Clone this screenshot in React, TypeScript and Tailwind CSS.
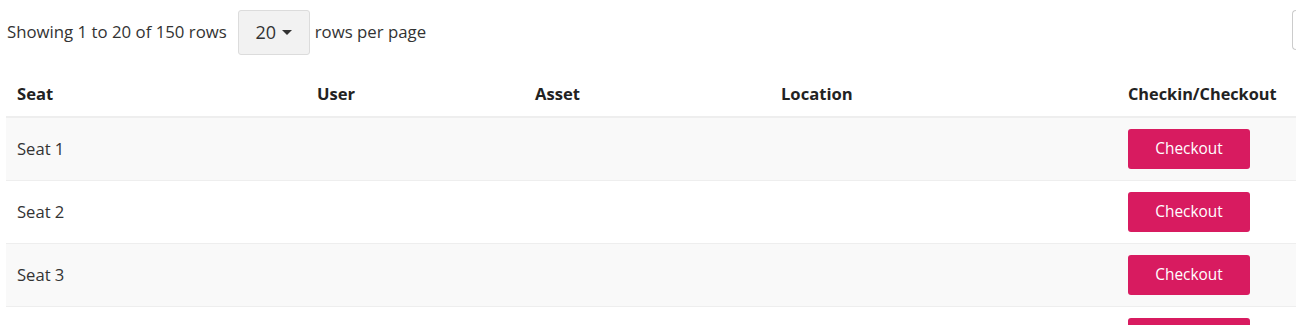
import React from "react";

const rows = ["Seat 1", "Seat 2", "Seat 3", "Seat 4"];

export default function App() {
  return (
    <div className="w-[1296px] h-[325px] overflow-hidden bg-white text-[#333] text-[16.6px]" style={{ fontFamily: '"Open Sans", "Noto Sans", sans-serif' }}>
      <div className="flex items-start justify-between pl-[7px] h-[64px] pt-[10px]">
        <div className="flex items-center">
          <span className="text-[16.8px] leading-[20px] -mt-[2px]">Showing 1 to 20 of 150 rows</span>
          <button className="ml-[11px] w-[72px] h-[45px] bg-[#f2f2f2] border border-[#dcdcdc] rounded-[3px] flex items-center justify-center gap-[6px] text-[18px] text-[#333]">
            <span>20</span>
            <svg width="10" height="6" viewBox="0 0 10 6"><path d="M0 0 L10 0 L5 5 Z" fill="#333" /></svg>
          </button>
          <span className="ml-[5px] text-[16.8px] leading-[20px] -mt-[2px]">rows per page</span>
        </div>
        <div className="w-[4px] h-[40px] border border-r-0 border-[#ccc] rounded-l-[4px]" />
      </div>
      <div className="ml-[6px]">
        <div className="flex h-[54px] items-end pb-[11px] leading-[22px] font-bold text-[#222] border-b-2 border-[#eee]">
          <div className="w-[300px] pl-[11px]">Seat</div>
          <div className="w-[218px] pl-[11px]">User</div>
          <div className="w-[246px] pl-[11px]">Asset</div>
          <div className="w-[347px] pl-[11px]">Location</div>
          <div className="flex-1 pl-[11px] text-[16.3px]">Checkin/Checkout</div>
        </div>
        {rows.map((r, i) => (
          <div key={r} className={`flex h-[63px] items-center border-b border-[#eee] ${i % 2 === 0 ? "bg-[#f9f9f9]" : "bg-white"}`}>
            <div className="w-[300px] pl-[11px]">{r}</div>
            <div className="w-[218px]" />
            <div className="w-[246px]" />
            <div className="w-[347px]" />
            <div className="flex-1 pl-[11px]">
              <button className="w-[122px] h-[40px] rounded-[3px] bg-[#d81b60] text-white text-[15.4px]">Checkout</button>
            </div>
          </div>
        ))}
      </div>
    </div>
  );
}
